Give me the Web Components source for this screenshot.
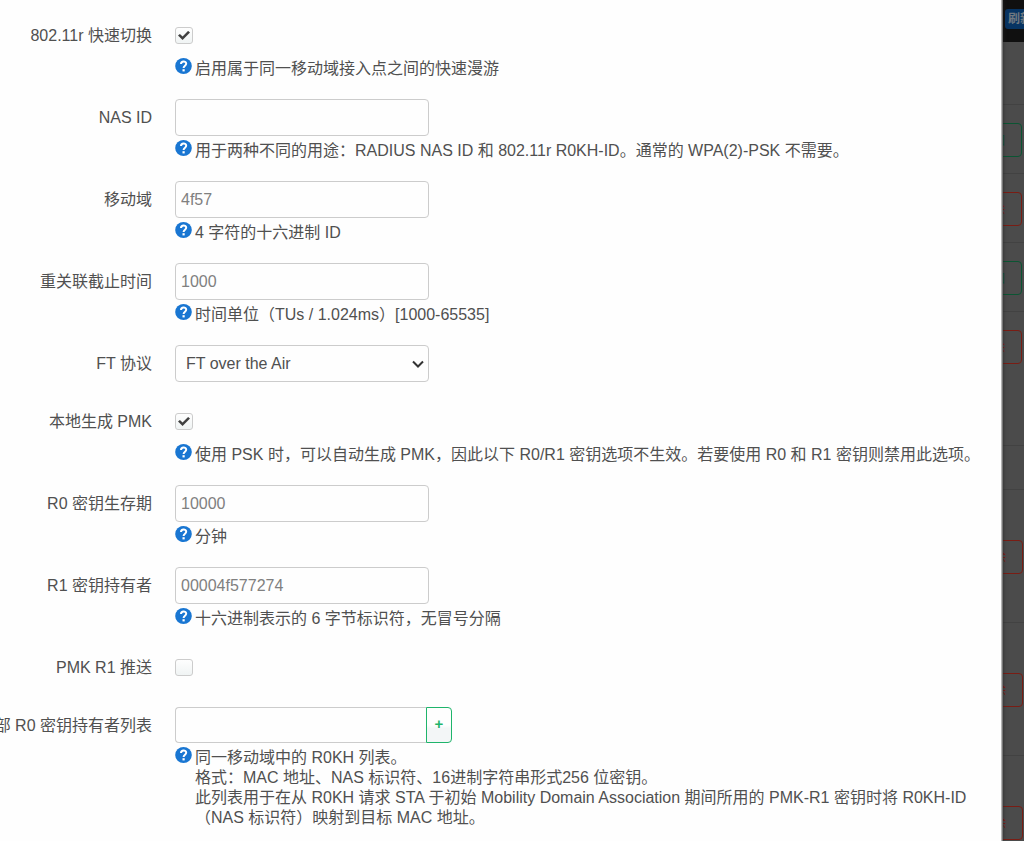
<!DOCTYPE html>
<html lang="zh-CN">
<head>
<meta charset="UTF-8">
<meta name="viewport" content="width=device-width, initial-scale=1">
<title>无线配置</title>
<style>
    html, body {
        height: 100%;
    }
    body {
        margin: 0;
        background: #4b4b4b;
        color: #505050;
        font: 16px/20px "Liberation Sans", "Noto Sans CJK SC", sans-serif;
    }
</style>
</head>
<body>
<wifi-page></wifi-page>

<script>
class HelpText extends HTMLElement {
    constructor() {
        super();
        this.attachShadow({ mode: "open" });
    }

    connectedCallback() {
        this.shadowRoot.innerHTML = `
            <style>
                :host {
                    display: flex;
                    gap: 3px;
                    margin-top: 4px;
                }
                svg {
                    flex: none;
                    width: 17px;
                    height: 16px;
                }
                .text {
                    padding-top: 1px;
                    margin-bottom: -1px;
                }
            </style>
            <svg viewBox="0 0 17 16" aria-hidden="true">
                <ellipse cx="8.5" cy="8" rx="8.3" ry="8" fill="#1976d2"/>
                <path d="M6 6C6 2.8 11.2 2.7 11.2 5.8C11.2 7.7 8.6 7.7 8.6 10" fill="none" stroke="#fff" stroke-width="2"/>
                <rect x="7.5" y="11.2" width="2.2" height="2.2" fill="#fff"/>
            </svg>
            <div class="text"><slot></slot></div>
        `;
    }
}

class FormRow extends HTMLElement {
    constructor() {
        super();
        this.attachShadow({ mode: "open" });
    }

    connectedCallback() {
        const label = this.getAttribute("label");
        this.shadowRoot.innerHTML = `
            <style>
                :host {
                    display: grid;
                    grid-template-columns: 152px minmax(0, 1fr);
                    column-gap: 23px;
                    padding-bottom: 21px;
                }
                label {
                    display: flex;
                    justify-content: flex-end;
                    height: 37px;
                    line-height: 37px;
                    white-space: nowrap;
                }
                .control {
                    display: flex;
                    align-items: center;
                    height: 37px;
                }
                .list {
                    height: 36px;
                }
                input, select, button {
                    box-sizing: border-box;
                    margin: 0;
                    font: inherit;
                    color: inherit;
                }
                .text, select {
                    width: 254px;
                    height: 37px;
                    padding: 0 5px;
                    border: 1px solid #ccc;
                    border-radius: 4px;
                    background-color: #fefefe;
                }
                .text::placeholder {
                    color: #808080;
                    opacity: 1;
                }
                select {
                    appearance: none;
                    padding: 0 10px;
                }
                .select {
                    display: grid;
                    align-items: center;
                }
                .select > * {
                    grid-area: 1 / 1;
                }
                .select svg {
                    justify-self: end;
                    width: 12px;
                    height: 8px;
                    margin-right: 5px;
                    pointer-events: none;
                }
                .check {
                    appearance: none;
                    display: grid;
                    place-items: center;
                    width: 18px;
                    height: 17px;
                    border: 1px solid #ccc;
                    border-radius: 3px;
                    background: linear-gradient(#fefefe, #f0f4f4);
                }
                .check:checked::before {
                    content: "";
                    width: 12px;
                    height: 10px;
                    background: #404040;
                    clip-path: polygon(0 50%, 16% 34%, 38% 60%, 84% 4%, 100% 20%, 38% 94%);
                }
                .list .text {
                    width: 251px;
                    height: 36px;
                    border-right: 0;
                    border-radius: 4px 0 0 4px;
                }
                button {
                    width: 26px;
                    height: 36px;
                    padding: 0 0 2px;
                    border: 1px solid #1fb46b;
                    border-radius: 0 4px 4px 0;
                    background: linear-gradient(#fefefe 50%, #f3f6f7 60%);
                    color: #1fb46b;
                    font-size: 15px;
                    font-weight: bold;
                }
            </style>
            <label for="field">${label}</label>
            <div>
                ${this.renderControl()}
                <slot></slot>
            </div>
        `;
    }

    renderControl() {
        const hint = this.getAttribute("placeholder") || "";
        switch (this.getAttribute("type")) {
            case "check":
                return `<div class="control"><input class="check" id="field" type="checkbox" ${this.hasAttribute("checked") ? "checked" : ""}></div>`;
            case "select":
                return `
                    <div class="control"><div class="select">
                        <select id="field"><option>${this.getAttribute("value")}</option></select>
                        <svg viewBox="0 0 12 8" aria-hidden="true"><path d="M1 1.5L6 6.5L11 1.5" fill="none" stroke="#333" stroke-width="2"/></svg>
                    </div></div>`;
            case "list":
                return `<div class="control list"><input class="text" id="field" type="text"><button type="button">+</button></div>`;
            default:
                return `<div class="control"><input class="text" id="field" type="text" placeholder="${hint}"></div>`;
        }
    }
}

class ModalPanel extends HTMLElement {
    constructor() {
        super();
        this.attachShadow({ mode: "open" });
    }

    connectedCallback() {
        this.shadowRoot.innerHTML = `
            <style>
                :host {
                    display: block;
                    flex: 1;
                    min-width: 0;
                    box-sizing: border-box;
                    padding-top: 17px;
                    background: #fefefe;
                    border-right: 1px solid #b4b4b4;
                    box-shadow: 1px 0 0 #777, 0 0 5px #222;
                    z-index: 1;
                }
            </style>
            <slot></slot>
        `;
    }
}

// One row of the page that lies dimmed behind the dialog
class DimmedRow extends HTMLElement {
    constructor() {
        super();
        this.attachShadow({ mode: "open" });
    }

    connectedCallback() {
        const tone = this.getAttribute("tone");
        const text = tone === "green" ? "添加" : "移除";
        this.shadowRoot.innerHTML = `
            <style>
                :host {
                    display: flex;
                    justify-content: flex-end;
                    box-sizing: border-box;
                    height: 69px;
                    padding: 18px 2px 0 0;
                    border-bottom: 1px solid #424242;
                }
                :host([size="head"]) { height: 63px; }
                :host([size="line"]) { height: 44px; }
                :host([size="last"]) { height: 134px; }
                :host([size="tall"]) {
                    height: 133px;
                    padding: 50px 1px 0 0;
                }
                button {
                    flex: none;
                    box-sizing: border-box;
                    width: 60px;
                    height: 34px;
                    padding: 0 16px;
                    border: 1px solid;
                    border-radius: 4px;
                    background: #4b4b4b;
                    font: inherit;
                    font-size: 13px;
                    white-space: nowrap;
                }
                .green { color: #0b5533; }
                .red { color: #7a1d14; }
            </style>
            ${tone ? `<button class="${tone}" type="button">${text}</button>` : ""}
        `;
    }
}

class DimmedPage extends HTMLElement {
    constructor() {
        super();
        this.attachShadow({ mode: "open" });
    }

    connectedCallback() {
        this.shadowRoot.innerHTML = `
            <style>
                :host {
                    display: block;
                    width: 22px;
                    overflow: hidden;
                }
                header {
                    box-sizing: border-box;
                    height: 42px;
                    padding: 9px 0 0 3px;
                    background: #101010;
                }
                a {
                    display: block;
                    width: 40px;
                    padding-left: 3px;
                    border-radius: 3px;
                    background: #073463;
                    color: #6f7880;
                    font-size: 12px;
                    font-weight: bold;
                    line-height: 20px;
                    text-decoration: none;
                }
                dimmed-row:last-child {
                    height: 85px;
                    border-bottom: 0;
                }
            </style>
            <header><a href="#">刷新</a></header>
            <dimmed-row size="head"></dimmed-row>
            <dimmed-row tone="green"></dimmed-row>
            <dimmed-row tone="red"></dimmed-row>
            <dimmed-row tone="green"></dimmed-row>
            <dimmed-row tone="red" size="last"></dimmed-row>
            <dimmed-row size="line"></dimmed-row>
            <dimmed-row tone="red" size="tall"></dimmed-row>
            <dimmed-row tone="red" size="tall"></dimmed-row>
            <dimmed-row tone="red" size="tall"></dimmed-row>
        `;
    }
}

class WifiPage extends HTMLElement {
    constructor() {
        super();
        this.attachShadow({ mode: "open" });
    }

    connectedCallback() {
        this.shadowRoot.innerHTML = `
            <style>
                :host {
                    display: flex;
                    min-height: 100%;
                }
                form-row:last-child {
                    padding-bottom: 0;
                }
            </style>
            <modal-panel>
                <form-row label="802.11r 快速切换" type="check" checked>
                    <help-text>启用属于同一移动域接入点之间的快速漫游</help-text>
                </form-row>
                <form-row label="NAS ID">
                    <help-text>用于两种不同的用途：RADIUS NAS ID 和 802.11r R0KH-ID。通常的 WPA(2)-PSK 不需要。</help-text>
                </form-row>
                <form-row label="移动域" placeholder="4f57">
                    <help-text>4 字符的十六进制 ID</help-text>
                </form-row>
                <form-row label="重关联截止时间" placeholder="1000">
                    <help-text>时间单位（TUs / 1.024ms）[1000-65535]</help-text>
                </form-row>
                <form-row label="FT 协议" type="select" value="FT over the Air"></form-row>
                <form-row label="本地生成 PMK" type="check" checked>
                    <help-text>使用 PSK 时，可以自动生成 PMK，因此以下 R0/R1 密钥选项不生效。若要使用 R0 和 R1 密钥则禁用此选项。</help-text>
                </form-row>
                <form-row label="R0 密钥生存期" placeholder="10000">
                    <help-text>分钟</help-text>
                </form-row>
                <form-row label="R1 密钥持有者" placeholder="00004f577274">
                    <help-text>十六进制表示的 6 字节标识符，无冒号分隔</help-text>
                </form-row>
                <form-row label="PMK R1 推送" type="check"></form-row>
                <form-row label="外部 R0 密钥持有者列表" type="list">
                    <help-text>同一移动域中的 R0KH 列表。<br>格式：MAC 地址、NAS 标识符、16进制字符串形式256 位密钥。<br>此列表用于在从 R0KH 请求 STA 于初始 Mobility Domain Association 期间所用的 PMK-R1 密钥时将 R0KH-ID<br>（NAS 标识符）映射到目标 MAC 地址。</help-text>
                </form-row>
            </modal-panel>
            <dimmed-page></dimmed-page>
        `;
    }
}

customElements.define("help-text", HelpText);
customElements.define("form-row", FormRow);
customElements.define("modal-panel", ModalPanel);
customElements.define("dimmed-row", DimmedRow);
customElements.define("dimmed-page", DimmedPage);
customElements.define("wifi-page", WifiPage);
</script>
</body>
</html>
